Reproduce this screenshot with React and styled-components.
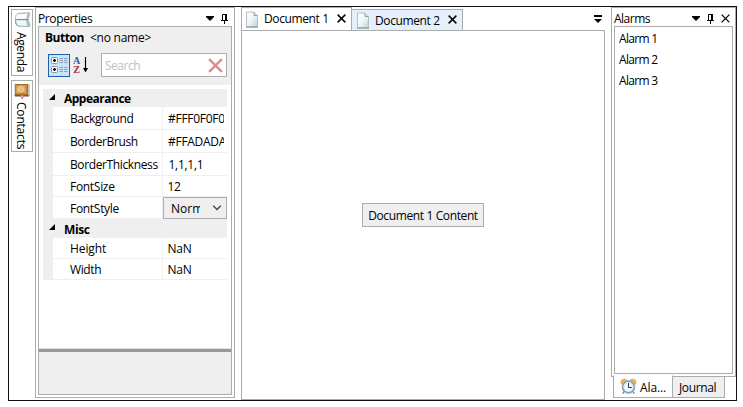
import React from "react";
import styled, { createGlobalStyle } from "styled-components";

const line = "#acacac";
const panel = "#efefef";

const Global = createGlobalStyle`
  * { box-sizing: border-box; }
  body { margin: 0; background: #fff; font: 12px/16px "Open Sans", "Noto Sans", sans-serif; color: #000; }
  svg { display: block; flex: none; }
`;

const Window = styled.main`
  width: 729px;
  height: 395px;
  margin: 6px 0 0 8px;
  display: flex;
  border: 1px solid #111;
  box-shadow: 0 1px 0 #ddd;
`;

const Label = styled.span`
  display: block;
  white-space: nowrap;
  font-weight: ${(p) => (p.$bold ? 700 : 400)};
  letter-spacing: ${(p) => p.$track ?? -0.38}px;
`;

const SideStrip = styled.aside`
  width: 26px;
  padding: 2px 0 0 2px;
  display: flex;
  flex-direction: column;
  gap: 4px;
`;

const SideTab = styled.div`
  width: 22px;
  height: ${(p) => p.$height}px;
  padding: 2px 0 0 2px;
  border: 1px solid ${line};
  display: flex;
  flex-direction: column;
  align-items: flex-start;
  gap: ${(p) => p.$gap}px;
`;

const SideLabel = styled(Label)`
  writing-mode: vertical-rl;
  line-height: 14px;
`;

const Dock = styled.section`
  width: ${(p) => p.$width}px;
  height: ${(p) => p.$height}px;
  border: 1px solid ${line};
  padding: 0 2px 2px;
  display: flex;
  flex-direction: column;
`;

const DockHeader = styled.header`
  height: 18px;
  flex: none;
  display: flex;
  align-items: center;
  justify-content: space-between;
  padding-top: 3px;
`;

const HeaderTools = styled.div`
  display: flex;
  align-items: center;
  gap: 7px;
  padding-right: ${(p) => p.$right}px;
`;

const DockBody = styled.div`
  flex: 1;
  min-height: 0;
  border: 1px solid ${line};
  background: ${(p) => (p.$gray ? panel : "#fff")};
  display: flex;
  flex-direction: column;
`;

const ObjectName = styled.div`
  height: 26px;
  padding: 3px 0 0 6px;
  display: flex;
  gap: 6px;
`;

const Toolbar = styled.div`
  height: 32px;
  padding-left: 9px;
  display: flex;
`;

const Toggle = styled.div`
  width: 22px;
  height: 23px;
  margin-top: 1px;
  border: 1px solid #1c62ad;
  background: #cce4f9;
`;

const SortIcon = styled.div`
  width: 18px;
  padding: 3px 0 0 3px;
`;

const Search = styled.div`
  width: 126px;
  height: 24px;
  margin-left: 13px;
  border: 1px solid ${line};
  background: #fff;
  color: #c0c0c0;
  display: flex;
  justify-content: space-between;
  align-items: center;
  padding: 0 3px 0 3px;

  ${Label} { padding-top: 2px; }
`;

const Grid = styled.div`
  height: 264px;
  flex: none;
  background: #fff;
  border-bottom: 1px solid #e3e3e3;
  padding: 4px 4px 0;
`;

const Category = styled.div`
  height: ${(p) => p.$height}px;
  background: ${panel};
  display: flex;
  align-items: flex-start;
  gap: 9px;
  padding: 0 0 0 6px;

  svg { margin-top: 5px; }
  ${Label} { padding-top: ${(p) => p.$height - 16}px; }
`;

const Rows = styled.div`
  border-left: 10px solid ${panel};
`;

const Row = styled.div`
  height: ${(p) => p.$height}px;
  display: grid;
  grid-template-columns: 110px 64px;
  border-bottom: 1px solid ${panel};
`;

const Cell = styled.div`
  min-width: 0;
  display: flex;
  align-items: center;
  padding-left: ${(p) => p.$left}px;
  border-right: ${(p) => (p.$name ? 1 : 0)}px solid ${panel};

  > ${Label} { padding-top: 2px; }
`;

const ValueText = styled.div`
  flex: 1;
  min-width: 0;
  margin-right: 3px;
  padding-top: 2px;
  overflow: hidden;
`;

const Combo = styled.div`
  flex: 1;
  height: 22px;
  margin-bottom: -1px;
  background: ${panel};
  border: 1px solid ${line};
  display: flex;
  align-items: center;
  justify-content: space-between;
  padding: 0 4px 0 7px;
`;

const ComboText = styled.div`
  width: 29px;
  padding-top: 2px;
  overflow: hidden;
`;

const Splitter = styled.div`
  height: 3px;
  flex: none;
  background: #999;
`;

const Documents = styled.section`
  width: 364px;
  height: 393px;
  margin: 0 6px;
  display: flex;
  flex-direction: column;
`;

const TabBar = styled.div`
  height: 23px;
  display: flex;
  align-items: flex-end;
`;

const ActiveTab = styled.div`
  width: 111px;
  height: 24px;
  margin-bottom: -1px;
  border: 1px solid ${line};
  border-bottom: 0;
  background: #fff;
  display: flex;
  padding: 3px 0 0 3px;
`;

const BackTab = styled.div`
  width: 111px;
  height: 21px;
  border: 1px solid ${line};
  border-left: 0;
  border-bottom: 0;
  background: #e4f0fb;
  display: flex;
  padding: 2px 0 0 4px;
`;

const TabTitle = styled.div`
  width: 73px;
  margin: ${(p) => p.$top}px 0 0 5px;
`;

const TabClose = styled.div`
  padding-top: ${(p) => p.$top}px;
`;

const BarMenu = styled.div`
  margin: 0 3px 7px auto;
`;

const Page = styled.div`
  flex: 1;
  border: 1px solid ${line};
  display: flex;
  justify-content: center;
  align-items: center;
`;

const PushButton = styled.button`
  width: 122px;
  height: 24px;
  padding: 2px 0 0;
  border: 1px solid ${line};
  background: ${panel};
  color: #000;
  font: inherit;
  display: flex;
  justify-content: center;
  align-items: center;
`;

const RightColumn = styled.div`
  width: 125px;
`;

const AlarmList = styled.div`
  padding: 4px 0 0 4px;
  display: flex;
  flex-direction: column;
  gap: 5px;
`;

const BottomTabs = styled.div`
  display: flex;
  align-items: flex-start;
  margin: -1px 0 0 2px;
`;

const BottomTab = styled.div`
  height: ${(p) => (p.$active ? 23 : 22)}px;
  width: ${(p) => (p.$active ? 60 : 52)}px;
  margin-top: ${(p) => (p.$active ? -1 : 0)}px;
  background: ${(p) => (p.$active ? "#fff" : panel)};
  border: 1px solid ${line};
  border-top-color: ${(p) => (p.$active ? "#fff" : line)};
  border-left-width: ${(p) => (p.$active ? 1 : 0)}px;
  display: flex;
  align-items: center;
  gap: 3px;
  padding-left: 6px;

  ${Label} { padding-top: 2px; }
`;

const Caret = () => (
  <svg width="8" height="5" viewBox="0 0 8 5"><path d="M0 0h8v1L4 5 0 1z" /></svg>
);

const Pin = () => (
  <svg width="7" height="10" viewBox="0 0 7 10">
    <path d="M1.5 6V.5h4V6M0 6.5h7M3.5 7v3" fill="none" stroke="#000" />
    <path d="M4 0h2v6H4z" />
  </svg>
);

const Cross = ({ size = 9, color = "#000", width = 1.8 }) => (
  <svg width={size} height={size} viewBox="0 0 10 10">
    <path d="M.7.7l8.6 8.6M9.3.7L.7 9.3" fill="none" stroke={color} strokeWidth={width} />
  </svg>
);

const DocIcon = () => (
  <svg width="14" height="17" viewBox="0 0 14 17">
    <defs>
      <linearGradient id="paper" x1="0" y1="0" x2="1" y2="1">
        <stop offset="0" stopColor="#fff" /><stop offset=".5" stopColor="#eef5f5" /><stop offset="1" stopColor="#bdd2d3" />
      </linearGradient>
    </defs>
    <path d="M1.5 1h7.5l3.5 3.5V16h-11z" fill="url(#paper)" stroke="#b4c2c3" />
    <path d="M1 16h12" stroke="#7c9194" />
    <path d="M9 1v3.5h3.5" fill="#d7e3e4" stroke="#8fa3a6" />
  </svg>
);

const AgendaIcon = () => (
  <svg width="17" height="16" viewBox="0 0 17 16">
    <path d="M4 1.5L15.5 .8V3L14 7.3 15.7 12v2.5L4 14z" fill="#b9c5c7" stroke="#8a989a" strokeWidth=".6" />
    <path d="M4.5 1.5C2 2 1.2 4 1.4 7.5l11.4-.2c0-2.5.4-4.6 1.9-6.3z" fill="#f8fcfc" stroke="#9aadaf" strokeWidth=".7" />
    <path d="M1.4 7.7c-.2 3.5.8 5.8 3.1 6.3l10.2.5c-1.4-1.8-1.9-4-1.9-6.7z" fill="#eef7f7" stroke="#8ba3a6" strokeWidth=".7" />
    <path d="M1.2 7.6h13.2" stroke="#6f8789" strokeWidth=".8" />
    <path d="M1.6 9.5c.1 2 .9 3.8 2.6 4.4" fill="none" stroke="#4f9fa8" />
  </svg>
);

const ContactsIcon = () => (
  <svg width="17" height="16" viewBox="0 0 17 16">
    <path d="M.8 1H14l1.4 1V13H.8z" fill="#9a6424" />
    <path d="M1.5 2h11.3v9H1.5z" fill="#d9a155" stroke="#b57c32" strokeWidth=".8" />
    <path d="M14.5 2v10.5" stroke="#cfc6b8" strokeWidth="1.2" />
    <path d="M.5 12.2h14l.7 1.2H1z" fill="#5d544b" />
    <path d="M5 9c-2.2-2.9-.2-6.2 2.8-5.3 2.9.9 2.5 4.9-.3 5-2.3 0-2.5-3.2-.6-3.4 1.3-.1 1.5 1.5.6 1.7" fill="none" stroke="#fdeccb" />
    <path d="M6 12.3l2.2 3.4L10 12.3z" fill="#f6d9d3" stroke="#d64635" strokeWidth=".8" />
  </svg>
);

const CategoryIcon = () => (
  <svg width="20" height="21" viewBox="0 0 20 21">
    {[2.5, 11.5].map((y) => (
      <g key={y}>
        <rect x="2.5" y={y} width="6" height="6" rx="1.2" fill="#fff" stroke="#8a97a3" />
        <path d={`M4 ${y + 3}h3M5.5 ${y + 1.5}v3`} stroke="#000" strokeWidth="1.3" />
        <path d={`M10.5 ${y + 1}h3.5m1 0h3.5M10.5 ${y + 3}h3.5m1 0h3.5M10.5 ${y + 5}h3.5m1 0h3.5`} stroke="#8a9db8" strokeWidth="1" />
      </g>
    ))}
  </svg>
);

const Glyph = styled.text`
  font: 700 10px "Liberation Serif", serif;
`;

const AzIcon = () => (
  <svg width="16" height="18" viewBox="0 0 16 18">
    <Glyph x="0" y="8" fill="#3156a0">A</Glyph>
    <Glyph x=".3" y="17" fill="#a32c3c">Z</Glyph>
    <path d="M12.5 1v13" stroke="#000" strokeWidth="1.2" />
    <path d="M10 12h5l-2.5 4.5z" />
  </svg>
);

const Chevron = () => (
  <svg width="10" height="6" viewBox="0 0 10 6">
    <path d="M1.2 .7l3.8 3.8L8.8 .7" fill="none" stroke="#444" strokeWidth="1.3" />
  </svg>
);

const Expander = () => (
  <svg width="6" height="6" viewBox="0 0 6 6"><path d="M6 0v6H0z" /></svg>
);

const OverflowIcon = () => (
  <svg width="8" height="8" viewBox="0 0 8 8"><path d="M0 0h8v2H0zM0 4h8L4 8z" /></svg>
);

const ClockIcon = () => (
  <svg width="17" height="17" viewBox="0 0 17 17">
    <path d="M.8 5.2L1.5 2 5.2 1l2 1.6-4.7 4.2zM16.2 5.2L15.5 2l-3.7-1-2 1.6 4.7 4.2z" fill="#efb554" stroke="#d09a4c" strokeWidth=".6" />
    <path d="M4 13.5L2.7 15.8M13 13.5l1.3 2.3" stroke="#8b8172" strokeWidth="1.3" />
    <circle cx="8.5" cy="9" r="5.9" fill="#f4faff" stroke="#86a1ba" strokeWidth="1.8" />
    <circle cx="8.5" cy="9" r="4.5" fill="none" stroke="#c3d7e6" strokeWidth=".7" />
    <path d="M8.5 5v4.5h3.3" fill="none" stroke="#333" />
  </svg>
);

const appearance = [
  ["Background", "#FFF0F0F0", 23, 5],
  ["BorderBrush", "#FFADADAD", 23, 5],
  ["BorderThickness", "1,1,1,1", 23, 5.5],
  ["FontSize", "12", 21, 4.5],
  ["FontStyle", null, 22, 0],
];
const misc = [["Height", "NaN", 21, 4.5], ["Width", "NaN", 21, 4.5]];

const nameTrack = { Height: -0.1, FontSize: -0.3, FontStyle: -0.3 };

function PropertyRows({ items }) {
  return (
    <Rows>
      {items.map(([name, value, height, left]) => (
        <Row key={name} $height={height}>
          <Cell $name $left={17}><Label $track={nameTrack[name]}>{name}</Label></Cell>
          <Cell $left={left}>
            {value ? <ValueText><Label $track={-0.28}>{value}</Label></ValueText> : (
              <Combo><ComboText><Label $track={0}>Normal</Label></ComboText><Chevron /></Combo>
            )}
          </Cell>
        </Row>
      ))}
    </Rows>
  );
}

export default function App() {
  return (
    <>
      <Global />
      <Window>
        <SideStrip>
          <SideTab $height={67} $gap={4}><AgendaIcon /><SideLabel>Agenda</SideLabel></SideTab>
          <SideTab $height={72} $gap={3}><ContactsIcon /><SideLabel $track={-0.2}>Contacts</SideLabel></SideTab>
        </SideStrip>

        <Dock $width={200} $height={391}>
          <DockHeader>
            <Label>Properties</Label>
            <HeaderTools $right={4}><Caret /><Pin /></HeaderTools>
          </DockHeader>
          <DockBody $gray>
            <ObjectName><Label $bold $track={-0.45}>Button</Label><Label $track={-0.25}>&lt;no name&gt;</Label></ObjectName>
            <Toolbar>
              <Toggle><CategoryIcon /></Toggle>
              <SortIcon><AzIcon /></SortIcon>
              <Search><Label $track={-0.5}>Search</Label><Cross size={15} color="#e08b8b" width={1.6} /></Search>
            </Toolbar>
            <Grid>
              <Category $height={18}><Expander /><Label $bold $track={-0.5}>Appearance</Label></Category>
              <PropertyRows items={appearance} />
              <Category $height={19}><Expander /><Label $bold $track={-0.4}>Misc</Label></Category>
              <PropertyRows items={misc} />
            </Grid>
            <Splitter />
          </DockBody>
        </Dock>

        <Documents>
          <TabBar>
            <ActiveTab>
              <DocIcon /><TabTitle $top={0}><Label>Document 1</Label></TabTitle>
              <TabClose $top={3}><Cross width={1.6} /></TabClose>
            </ActiveTab>
            <BackTab>
              <DocIcon /><TabTitle $top={1}><Label>Document 2</Label></TabTitle>
              <TabClose $top={3}><Cross width={1.6} /></TabClose>
            </BackTab>
            <BarMenu><OverflowIcon /></BarMenu>
          </TabBar>
          <Page><PushButton><Label>Document 1 Content</Label></PushButton></Page>
        </Documents>

        <RightColumn>
          <Dock $width={125} $height={370}>
            <DockHeader>
              <Label $track={-0.5}>Alarms</Label>
              <HeaderTools $right={3}><Caret /><Pin /><Cross width={1.4} /></HeaderTools>
            </DockHeader>
            <DockBody>
              <AlarmList>
                <Label $track={-0.7}>Alarm 1</Label>
                <Label $track={-0.7}>Alarm 2</Label>
                <Label $track={-0.7}>Alarm 3</Label>
              </AlarmList>
            </DockBody>
          </Dock>
          <BottomTabs>
            <BottomTab $active><ClockIcon /><Label $track={-0.1}>Ala...</Label></BottomTab>
            <BottomTab><Label>Journal</Label></BottomTab>
          </BottomTabs>
        </RightColumn>
      </Window>
    </>
  );
}
